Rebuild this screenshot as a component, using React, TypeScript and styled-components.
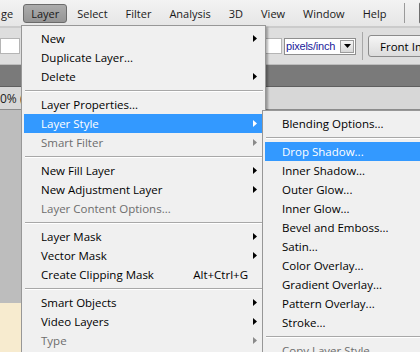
import styled, { createGlobalStyle } from "styled-components";

const GlobalStyle = createGlobalStyle`
  body {
    margin: 0;
    font-family: "Segoe UI", "Open Sans", sans-serif;
    font-size: 11.5px;
  }
`;

type Item = {
  label?: string;
  sub?: boolean;
  off?: boolean;
  active?: boolean;
  keys?: string;
  sep?: boolean;
};

const layerItems: Item[] = [
  { label: "New", sub: true },
  { label: "Duplicate Layer..." },
  { label: "Delete", sub: true },
  { sep: true },
  { label: "Layer Properties..." },
  { label: "Layer Style", sub: true, active: true },
  { label: "Smart Filter", sub: true, off: true },
  { sep: true },
  { label: "New Fill Layer", sub: true },
  { label: "New Adjustment Layer", sub: true },
  { label: "Layer Content Options...", off: true },
  { sep: true },
  { label: "Layer Mask", sub: true },
  { label: "Vector Mask", sub: true },
  { label: "Create Clipping Mask", keys: "Alt+Ctrl+G" },
  { sep: true },
  { label: "Smart Objects", sub: true },
  { label: "Video Layers", sub: true },
  { label: "Type", sub: true, off: true },
];

const styleItems: Item[] = [
  { label: "Blending Options..." },
  { sep: true },
  { label: "Drop Shadow...", active: true },
  { label: "Inner Shadow..." },
  { label: "Outer Glow..." },
  { label: "Inner Glow..." },
  { label: "Bevel and Emboss..." },
  { label: "Satin..." },
  { label: "Color Overlay..." },
  { label: "Gradient Overlay..." },
  { label: "Pattern Overlay..." },
  { label: "Stroke..." },
  { sep: true },
  { label: "Copy Layer Style", off: true },
  { label: "Paste Layer Style", off: true },
  { label: "Clear Layer Style", off: true },
];

const menuNames = ["Select", "Filter", "Analysis", "3D", "View", "Window", "Help"];

export default function App() {
  return (
    <>
      <GlobalStyle />
      <Screen>
        <MenuBar>
          <BarItem $cut>ge</BarItem>
          <BarItem $open>Layer</BarItem>
          {menuNames.map((n) => (
            <BarItem key={n}>{n}</BarItem>
          ))}
          <BarDivider />
          <BarBox />
        </MenuBar>
        <OptionsBar>
          <Field $w={20} />
          <Field $w={82} $ml={180} />
          <Select>
            <span>pixels/inch</span>
            <DropBtn>
              <svg width="7" height="4" viewBox="0 0 7 4">
                <path d="M0 0h7L3.5 4z" fill="#000" />
              </svg>
            </DropBtn>
          </Select>
          <OptDivider />
          <OptButton>Front Image</OptButton>
        </OptionsBar>
        <PanelStrip />
        <DocTab>0% (</DocTab>
        <Workspace>
          <Canvas />
        </Workspace>

        <Menu $left={21} $top={25} $width={245}>
          {layerItems.map((it, i) => (
            <MenuEntry key={i} item={it} />
          ))}
        </Menu>
        <Menu $left={262} $top={110} $width={200}>
          {styleItems.map((it, i) => (
            <MenuEntry key={i} item={it} />
          ))}
        </Menu>
      </Screen>
    </>
  );
}

const MenuEntry = ({ item }: { item: Item }) => {
  if (item.sep) return <Sep />;
  return (
    <Row $active={item.active} $off={item.off}>
      <span>{item.label}</span>
      {item.keys && <Keys>{item.keys}</Keys>}
      {item.sub && (
        <Arrow>
          <svg width="4" height="7" viewBox="0 0 4 7">
            <path d="M0 0L4 3.5L0 7z" fill={item.active ? "#fff" : item.off ? "#8a8a8a" : "#000"} />
          </svg>
        </Arrow>
      )}
    </Row>
  );
};

const Screen = styled.div`
  position: relative;
  width: 420px;
  height: 352px;
  overflow: hidden;
  background: #bcbcbc;
  display: flex;
  flex-direction: column;
`;

const MenuBar = styled.div`
  height: 28px;
  flex-shrink: 0;
  display: flex;
  align-items: center;
  gap: 2px;
  background: linear-gradient(#f3f3f3, #e6e6e6);
  border-bottom: 2px solid #cbcbcb;
  box-sizing: border-box;
  color: #1a1a1a;
  font-size: 11px;
`;

const BarItem = styled.div<{ $open?: boolean; $cut?: boolean }>`
  flex-shrink: 0;
  height: 19px;
  line-height: 17px;
  padding: 0 7px;
  box-sizing: border-box;
  border-radius: 3px;
  border: 1px solid ${(p) => (p.$open ? "#6b6b6b" : "transparent")};
  background: ${(p) => (p.$open ? "linear-gradient(#acacac, #959595)" : "none")};
  ${(p) => (p.$cut ? "padding: 0 7px 0 0;" : "")}
`;

const BarDivider = styled.div`
  flex-shrink: 0;
  width: 1px;
  height: 20px;
  background: #9a9a9a;
  margin-left: 8px;
`;

const BarBox = styled.div`
  flex-shrink: 0;
  width: 14px;
  height: 20px;
  margin-left: 12px;
  border: 1px solid #6f6f6f;
  border-radius: 2px;
  background: #d6d6d6;
`;

const OptionsBar = styled.div`
  height: 37px;
  flex-shrink: 0;
  display: flex;
  align-items: center;
  background: #dedede;
  border-bottom: 1px solid #bdbdbd;
  box-sizing: border-box;
  font-size: 11.5px;
`;

const Field = styled.div<{ $w: number; $ml?: number }>`
  flex-shrink: 0;
  width: ${(p) => p.$w}px;
  height: 16px;
  margin-left: ${(p) => p.$ml ?? 0}px;
  background: #fff;
  border: 1px solid #b5b5b5;
  box-sizing: border-box;
`;

const Select = styled.div`
  flex-shrink: 0;
  width: 72px;
  height: 17px;
  margin-left: 2px;
  display: flex;
  align-items: center;
  justify-content: space-between;
  background: #fff;
  border: 1px solid #8e8e8e;
  box-sizing: border-box;
  padding-left: 1px;
  font-family: "Liberation Sans", sans-serif;
  font-size: 11px;
  color: #1a1a9a;
  letter-spacing: -0.2px;
`;

const DropBtn = styled.div`
  width: 14px;
  height: 13px;
  margin-right: 1px;
  display: flex;
  align-items: center;
  justify-content: center;
  background: linear-gradient(#f4f4f4, #d8d8d8);
  border: 1px solid #9c9c9c;
  box-sizing: border-box;
`;

const OptDivider = styled.div`
  flex-shrink: 0;
  width: 1px;
  height: 28px;
  margin: 0 5px 0 6px;
  background: #a8a8a8;
`;

const OptButton = styled.div`
  flex-shrink: 0;
  height: 22px;
  padding: 0 11px;
  display: flex;
  align-items: center;
  white-space: nowrap;
  border: 1px solid #8b8b8b;
  border-radius: 3px;
  background: linear-gradient(#f6f6f6, #dcdcdc);
  box-sizing: border-box;
`;

const PanelStrip = styled.div`
  height: 21px;
  flex-shrink: 0;
  background: #7a7a7a;
  border-bottom: 1px solid #5f5f5f;
`;

const DocTab = styled.div`
  height: 22px;
  flex-shrink: 0;
  display: flex;
  align-items: center;
  background: #d7d7d7;
  border-bottom: 1px solid #8c8c8c;
  font-size: 12px;
  color: #222;
`;

const Workspace = styled.div`
  flex: 1;
  display: flex;
  flex-direction: column;
  justify-content: flex-end;
  background: #bdbdbd;
`;

const Canvas = styled.div`
  height: 49px;
  background: #f7ebcf;
`;

const Menu = styled.div<{ $left: number; $top: number; $width: number }>`
  position: absolute;
  left: ${(p) => p.$left}px;
  top: ${(p) => p.$top}px;
  width: ${(p) => p.$width}px;
  padding: 3px 2px;
  background: #f0f0f0;
  border: 1px solid #979797;
  box-sizing: border-box;
  box-shadow: 2px 2px 2px rgba(0, 0, 0, 0.3);
  color: #000;
`;

const Row = styled.div<{ $active?: boolean; $off?: boolean }>`
  height: 19px;
  display: flex;
  align-items: center;
  padding: 0 6px 0 17px;
  white-space: nowrap;
  background: ${(p) => (p.$active ? "#3399ff" : "transparent")};
  color: ${(p) => (p.$active ? "#fff" : p.$off ? "#6d6d6d" : "#000")};
`;

const Keys = styled.span`
  margin-left: auto;
  margin-right: 9px;
`;

const Arrow = styled.span`
  margin-left: auto;
  display: flex;
`;

const Sep = styled.div`
  height: 9px;
  display: flex;
  align-items: center;
  &::before {
    content: "";
    flex: 1;
    margin-left: 1px;
    height: 1px;
    background: #a8a8a8;
    box-shadow: 0 1px 0 #fff;
  }
`;
